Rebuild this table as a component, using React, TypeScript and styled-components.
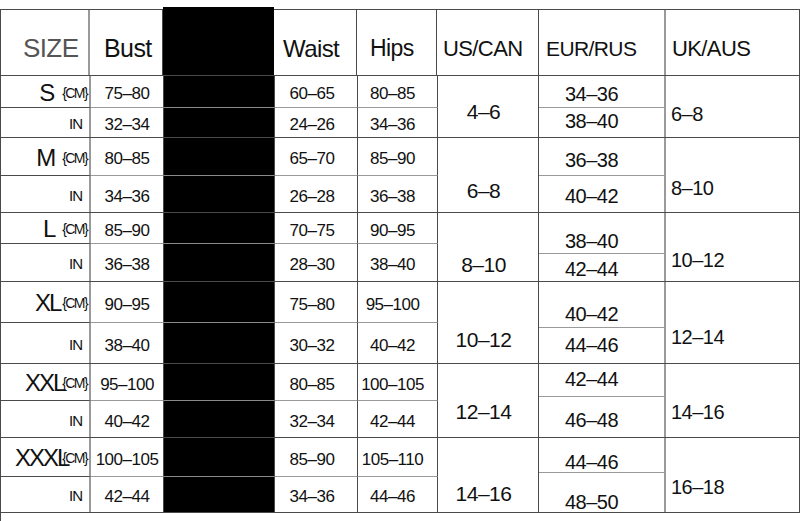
import React from "react";
import styled, { createGlobalStyle } from "styled-components";

const Global = createGlobalStyle`
  html, body { margin: 0; padding: 0; background: #fff; }
  * { box-sizing: border-box; }
  body { font-family: "Liberation Sans", Arial, sans-serif; color: #111; }
`;

const LINE = "#4a4a4a";
const SOFT = "#9a9a9a";

const Table = styled.div`
  width: 800px;
  margin-top: 9px;
  display: flex;
  flex-direction: column;
`;

const HeaderRow = styled.div`
  display: grid;
  grid-template-columns: 90px 73px 111px 83px 80px 102px 127px 134px;
  height: 67px;
  border-top: 1px solid ${LINE};
  border-bottom: 1px solid ${LINE};
`;

const HeadCell = styled.div<{ $pl: number; $size: number; $gray?: boolean; $first?: boolean; $soft?: boolean; $last?: boolean }>`
  display: flex;
  align-items: center;
  justify-content: flex-start;
  padding-left: ${(p) => p.$pl}px;
  padding-top: 12px;
  font-size: ${(p) => p.$size}px;
  letter-spacing: -0.6px;
  color: ${(p) => (p.$gray ? "#555" : "#111")};
  border-right: ${(p) => (p.$soft ? `2px solid ${SOFT}` : `1px solid ${LINE}`)};
  border-left: ${(p) => (p.$first ? `1px solid ${LINE}` : "none")};
  white-space: nowrap;
`;

const BlackHead = styled.div`
  background: #000;
  margin-top: -3px;
`;

const Group = styled.div<{ $h: number }>`
  display: flex;
  height: ${(p) => p.$h}px;
  border-bottom: 1px solid ${LINE};
`;

const Left = styled.div<{ $split: number }>`
  display: grid;
  width: 437px;
  grid-template-columns: 90px 73px 111px 83px 80px;
  grid-template-rows: ${(p) => p.$split}px 1fr;
  border-left: 1px solid ${LINE};
`;

const SizeCell = styled.div<{ $top?: boolean }>`
  display: flex;
  align-items: center;
  justify-content: flex-end;
  padding-right: 2px;
  padding-top: 2px;
  border-right: 2px solid ${SOFT};
  border-bottom: ${(p) => (p.$top ? `1px solid ${LINE}` : "none")};
  white-space: nowrap;
`;

const SizeBig = styled.span`
  font-size: 24px;
  letter-spacing: -2px;
  color: #111;
`;

const Unit = styled.span<{ $ml: number }>`
  font-size: 14px;
  letter-spacing: -1.6px;
  margin-left: ${(p) => p.$ml}px;
  color: #111;
`;

const InLabel = styled.span`
  font-size: 15px;
  letter-spacing: -1px;
  margin-right: 5px;
  color: #111;
`;

const DataCell = styled.div<{ $top?: boolean; $pr?: number }>`
  display: flex;
  align-items: center;
  justify-content: center;
  padding-top: 5px;
  padding-right: ${(p) => p.$pr ?? 0}px;
  font-size: 17px;
  letter-spacing: -0.5px;
  border-right: 1px solid ${LINE};
  border-bottom: ${(p) => (p.$top ? `1px solid ${SOFT}` : "none")};
  white-space: nowrap;
`;

const BlackCell = styled.div<{ $top?: boolean }>`
  background: #000;
  border-right: 1px solid ${LINE};
  border-bottom: ${(p) => (p.$top ? "1px solid #8a8a8a" : "none")};
`;

const UsCell = styled.div<{ $dy: number }>`
  width: 102px;
  display: flex;
  align-items: center;
  justify-content: center;
  padding-right: 8px;
  padding-top: ${(p) => Math.max(0, p.$dy * 2)}px;
  padding-bottom: ${(p) => Math.max(0, -p.$dy * 2)}px;
  font-size: 21px;
  letter-spacing: -0.5px;
  border-right: 1px solid ${LINE};
`;

const EurBlock = styled.div<{ $split: number }>`
  width: 127px;
  display: grid;
  grid-template-rows: ${(p) => p.$split}px 1fr;
  border-right: 2px solid ${SOFT};
`;

const EurCell = styled.div<{ $dy: number; $top?: boolean }>`
  display: flex;
  align-items: center;
  justify-content: center;
  padding-right: 20px;
  padding-top: ${(p) => Math.max(0, p.$dy * 2)}px;
  padding-bottom: ${(p) => Math.max(0, -p.$dy * 2)}px;
  font-size: 20px;
  letter-spacing: -0.5px;
  border-bottom: ${(p) => (p.$top ? `1px solid ${SOFT}` : "none")};
  white-space: nowrap;
`;

const UkCell = styled.div<{ $dy: number }>`
  width: 134px;
  display: flex;
  align-items: center;
  justify-content: flex-start;
  padding-left: 5px;
  padding-top: ${(p) => Math.max(0, p.$dy * 2)}px;
  font-size: 20px;
  letter-spacing: -0.5px;
  border-right: 1px solid ${LINE};
`;

const Footer = styled.div`
  height: 8px;
  border-left: 1px solid ${LINE};
`;

type G = {
  size: string;
  ml: number;
  h: number;
  split: number;
  bust: [string, string];
  waist: [string, string];
  hips: [string, string];
  us: string;
  usDy: number;
  eur: [string, string];
  eurSplit: number;
  eurDy: [number, number];
  uk: string;
  ukDy: number;
};

const groups: G[] = [
  { size: "S", ml: 9, h: 62, split: 32, bust: ["75–80", "32–34"], waist: ["60–65", "24–26"], hips: ["80–85", "34–36"], us: "4–6", usDy: 5, eur: ["34–36", "38–40"], eurSplit: 32, eurDy: [3, -1], uk: "6–8", ukDy: 8 },
  { size: "M", ml: 8, h: 75, split: 38, bust: ["80–85", "34–36"], waist: ["65–70", "26–28"], hips: ["85–90", "36–38"], us: "6–8", usDy: 16, eur: ["36–38", "40–42"], eurSplit: 38, eurDy: [4, 2], uk: "8–10", ukDy: 13 },
  { size: "L", ml: 8, h: 69, split: 31, bust: ["85–90", "36–38"], waist: ["70–75", "28–30"], hips: ["90–95", "38–40"], us: "8–10", usDy: 18, eur: ["38–40", "42–44"], eurSplit: 41, eurDy: [8, 2], uk: "10–12", ukDy: 13 },
  { size: "XL", ml: 2, h: 82, split: 41, bust: ["90–95", "38–40"], waist: ["75–80", "30–32"], hips: ["95–100", "40–42"], us: "10–12", usDy: 17, eur: ["40–42", "44–46"], eurSplit: 46, eurDy: [10, 0], uk: "12–14", ukDy: 15 },
  { size: "XXL", ml: -2, h: 74, split: 37, bust: ["95–100", "40–42"], waist: ["80–85", "32–34"], hips: ["100–105", "42–44"], us: "12–14", usDy: 11, eur: ["42–44", "46–48"], eurSplit: 33, eurDy: [-1, 3], uk: "14–16", ukDy: 12 },
  { size: "XXXL", ml: -6, h: 75, split: 39, bust: ["100–105", "42–44"], waist: ["85–90", "34–36"], hips: ["105–110", "44–46"], us: "14–16", usDy: 19, eur: ["44–46", "48–50"], eurSplit: 35, eurDy: [7, 9], uk: "16–18", ukDy: 12 },
];

export default function App() {
  return (
    <>
      <Global />
      <Table>
        <HeaderRow>
          <HeadCell $pl={22} $size={26} $gray $first $soft>SIZE</HeadCell>
          <HeadCell $pl={14} $size={25}>Bust</HeadCell>
          <BlackHead />
          <HeadCell $pl={9} $size={24}>Waist</HeadCell>
          <HeadCell $pl={13} $size={23}>Hips</HeadCell>
          <HeadCell $pl={6} $size={22}>US/CAN</HeadCell>
          <HeadCell $pl={7} $size={21} $soft>EUR/RUS</HeadCell>
          <HeadCell $pl={6} $size={22} $last>UK/AUS</HeadCell>
        </HeaderRow>
        {groups.map((g) => (
          <Group key={g.size} $h={g.h}>
            <Left $split={g.split}>
              <SizeCell $top>
                <SizeBig>{g.size}</SizeBig>
                <Unit $ml={g.ml}>{"{CM}"}</Unit>
              </SizeCell>
              <DataCell $top>{g.bust[0]}</DataCell>
              <BlackCell $top />
              <DataCell $top $pr={8}>{g.waist[0]}</DataCell>
              <DataCell $top $pr={10}>{g.hips[0]}</DataCell>
              <SizeCell>
                <InLabel>IN</InLabel>
              </SizeCell>
              <DataCell>{g.bust[1]}</DataCell>
              <BlackCell />
              <DataCell $pr={8}>{g.waist[1]}</DataCell>
              <DataCell $pr={10}>{g.hips[1]}</DataCell>
            </Left>
            <UsCell $dy={g.usDy}>{g.us}</UsCell>
            <EurBlock $split={g.eurSplit}>
              <EurCell $top $dy={g.eurDy[0]}>{g.eur[0]}</EurCell>
              <EurCell $dy={g.eurDy[1]}>{g.eur[1]}</EurCell>
            </EurBlock>
            <UkCell $dy={g.ukDy}>{g.uk}</UkCell>
          </Group>
        ))}
        <Footer />
      </Table>
    </>
  );
}
